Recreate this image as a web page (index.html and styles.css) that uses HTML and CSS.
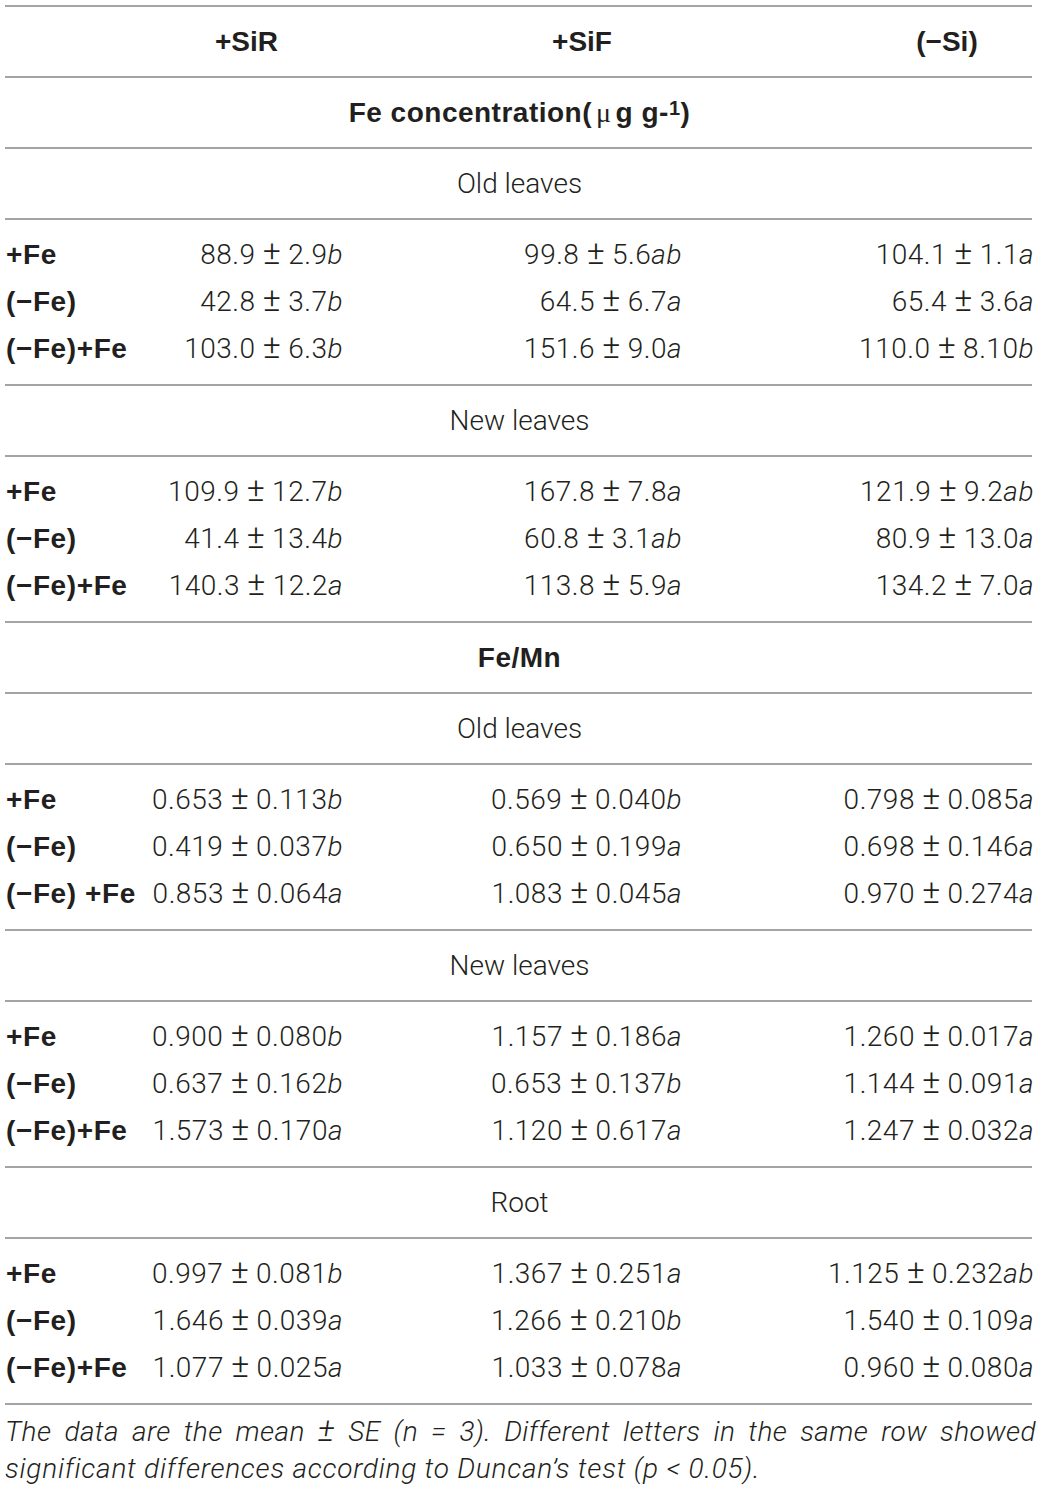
FILE: index.html
```html
<!DOCTYPE html>
<html>
<head>
<meta charset="utf-8">
<link rel="stylesheet" href="styles.css">
</head>
<body>
<div class="table">
  <div class="row head">
    <div class="lab"></div>
    <div class="h c1">+SiR</div>
    <div class="h c2">+SiF</div>
    <div class="h c3">(−Si)</div>
  </div>
  <div class="sec bold">Fe concentration(<span class="mu">μ</span> g g-<sup>1</sup>)</div>
  <div class="sec">Old leaves</div>
  <div class="block">
    <div class="row"><div class="lab">+Fe</div><div class="d c1">88.9 <span class="pm">±</span> 2.9<i>b</i></div><div class="d c2">99.8 <span class="pm">±</span> 5.6<i>ab</i></div><div class="d c3">104.1 <span class="pm">±</span> 1.1<i>a</i></div></div>
    <div class="row"><div class="lab">(−Fe)</div><div class="d c1">42.8 <span class="pm">±</span> 3.7<i>b</i></div><div class="d c2">64.5 <span class="pm">±</span> 6.7<i>a</i></div><div class="d c3">65.4 <span class="pm">±</span> 3.6<i>a</i></div></div>
    <div class="row"><div class="lab">(−Fe)+Fe</div><div class="d c1">103.0 <span class="pm">±</span> 6.3<i>b</i></div><div class="d c2">151.6 <span class="pm">±</span> 9.0<i>a</i></div><div class="d c3">110.0 <span class="pm">±</span> 8.10<i>b</i></div></div>
  </div>
  <div class="sec">New leaves</div>
  <div class="block">
    <div class="row"><div class="lab">+Fe</div><div class="d c1">109.9 <span class="pm">±</span> 12.7<i>b</i></div><div class="d c2">167.8 <span class="pm">±</span> 7.8<i>a</i></div><div class="d c3">121.9 <span class="pm">±</span> 9.2<i>ab</i></div></div>
    <div class="row"><div class="lab">(−Fe)</div><div class="d c1">41.4 <span class="pm">±</span> 13.4<i>b</i></div><div class="d c2">60.8 <span class="pm">±</span> 3.1<i>ab</i></div><div class="d c3">80.9 <span class="pm">±</span> 13.0<i>a</i></div></div>
    <div class="row"><div class="lab">(−Fe)+Fe</div><div class="d c1">140.3 <span class="pm">±</span> 12.2<i>a</i></div><div class="d c2">113.8 <span class="pm">±</span> 5.9<i>a</i></div><div class="d c3">134.2 <span class="pm">±</span> 7.0<i>a</i></div></div>
  </div>
  <div class="sec bold">Fe/Mn</div>
  <div class="sec">Old leaves</div>
  <div class="block">
    <div class="row"><div class="lab">+Fe</div><div class="d c1">0.653 <span class="pm">±</span> 0.113<i>b</i></div><div class="d c2">0.569 <span class="pm">±</span> 0.040<i>b</i></div><div class="d c3">0.798 <span class="pm">±</span> 0.085<i>a</i></div></div>
    <div class="row"><div class="lab">(−Fe)</div><div class="d c1">0.419 <span class="pm">±</span> 0.037<i>b</i></div><div class="d c2">0.650 <span class="pm">±</span> 0.199<i>a</i></div><div class="d c3">0.698 <span class="pm">±</span> 0.146<i>a</i></div></div>
    <div class="row"><div class="lab">(−Fe) +Fe</div><div class="d c1">0.853 <span class="pm">±</span> 0.064<i>a</i></div><div class="d c2">1.083 <span class="pm">±</span> 0.045<i>a</i></div><div class="d c3">0.970 <span class="pm">±</span> 0.274<i>a</i></div></div>
  </div>
  <div class="sec">New leaves</div>
  <div class="block">
    <div class="row"><div class="lab">+Fe</div><div class="d c1">0.900 <span class="pm">±</span> 0.080<i>b</i></div><div class="d c2">1.157 <span class="pm">±</span> 0.186<i>a</i></div><div class="d c3">1.260 <span class="pm">±</span> 0.017<i>a</i></div></div>
    <div class="row"><div class="lab">(−Fe)</div><div class="d c1">0.637 <span class="pm">±</span> 0.162<i>b</i></div><div class="d c2">0.653 <span class="pm">±</span> 0.137<i>b</i></div><div class="d c3">1.144 <span class="pm">±</span> 0.091<i>a</i></div></div>
    <div class="row"><div class="lab">(−Fe)+Fe</div><div class="d c1">1.573 <span class="pm">±</span> 0.170<i>a</i></div><div class="d c2">1.120 <span class="pm">±</span> 0.617<i>a</i></div><div class="d c3">1.247 <span class="pm">±</span> 0.032<i>a</i></div></div>
  </div>
  <div class="sec">Root</div>
  <div class="block">
    <div class="row"><div class="lab">+Fe</div><div class="d c1">0.997 <span class="pm">±</span> 0.081<i>b</i></div><div class="d c2">1.367 <span class="pm">±</span> 0.251<i>a</i></div><div class="d c3">1.125 <span class="pm">±</span> 0.232<i>ab</i></div></div>
    <div class="row"><div class="lab">(−Fe)</div><div class="d c1">1.646 <span class="pm">±</span> 0.039<i>a</i></div><div class="d c2">1.266 <span class="pm">±</span> 0.210<i>b</i></div><div class="d c3">1.540 <span class="pm">±</span> 0.109<i>a</i></div></div>
    <div class="row"><div class="lab">(−Fe)+Fe</div><div class="d c1">1.077 <span class="pm">±</span> 0.025<i>a</i></div><div class="d c2">1.033 <span class="pm">±</span> 0.078<i>a</i></div><div class="d c3">0.960 <span class="pm">±</span> 0.080<i>a</i></div></div>
  </div>
  <div class="foot">
    <span class="fl1">The data are the mean <span class="fpm">±</span> SE (<i>n</i> = 3). Different letters in the same row showed</span>
    <span class="fl2">significant differences according to Duncan’s test (<i>p</i> &lt; 0.05).</span>
  </div>
</div>
</body>
</html>
```
FILE: styles.css
```css
html, body {
  margin: 0;
  padding: 0;
  background: #ffffff;
}
body {
  color: #231f20;
  font-family: "Roboto", "Liberation Sans", sans-serif;
  font-weight: 300;
}
.table {
  margin: 5px 0 0 5px;
  width: 1027px;
  border-top: 2px solid #a4a4a4;
}
.row {
  display: grid;
  grid-template-columns: 145px 193px 339px 350px;
  height: 47px;
  align-items: center;
  font-size: 28px;
  white-space: nowrap;
}
.row.head {
  height: 69px;
  border-bottom: 2px solid #a4a4a4;
}
.lab {
  font-family: "Liberation Sans", sans-serif;
  font-weight: 700;
  font-size: 28px;
  letter-spacing: 0.6px;
  padding-left: 1px;
}
.h {
  font-family: "Liberation Sans", sans-serif;
  font-weight: 700;
  font-size: 28px;
  text-align: center;
}
.h.c2 {
  padding-left: 139px;
}
.h.c3 {
  padding-left: 178px;
  margin-right: -2px;
}
.d {
  text-align: right;
  letter-spacing: 0.5px;
}
.d.c3 {
  margin-right: -2px;
}
.d i {
  font-style: italic;
}
.pm {
  font-size: 34px;
  line-height: 0;
  letter-spacing: 0;
}
.sec {
  height: 69px;
  border-bottom: 2px solid #a4a4a4;
  display: flex;
  align-items: center;
  justify-content: center;
  font-size: 28px;
  padding-left: 2px;
}
.sec.bold {
  font-family: "Liberation Sans", sans-serif;
  font-weight: 700;
  font-size: 28px;
  letter-spacing: 0.5px;
}
.mu {
  font-family: "Liberation Serif", serif;
  font-weight: 400;
  margin: 0 4px 0 4px;
}
.sec sup {
  font-size: 20px;
  line-height: 0;
  position: relative;
  top: -5px;
}
.block {
  padding: 11px 0 12px;
  border-bottom: 2px solid #a4a4a4;
}
.foot {
  font-style: italic;
  font-size: 28px;
  line-height: 37px;
  letter-spacing: 0.4px;
  padding-top: 8px;
  width: 1031px;
}
.fl1 {
  display: block;
  white-space: nowrap;
  text-align: justify;
  text-align-last: justify;
}
.fl2 {
  display: block;
  letter-spacing: 0.75px;
}
.fpm {
  font-size: 33px;
  line-height: 0;
}
```
